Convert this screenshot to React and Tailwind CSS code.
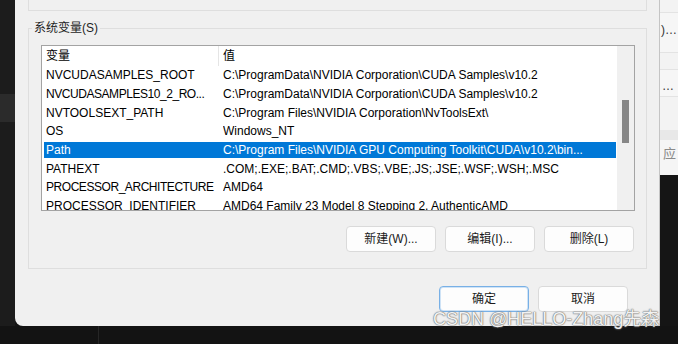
import React from 'react';

const rows = [
  ['NVCUDASAMPLES_ROOT', 'C:\\ProgramData\\NVIDIA Corporation\\CUDA Samples\\v10.2'],
  ['NVCUDASAMPLES10_2_RO...', 'C:\\ProgramData\\NVIDIA Corporation\\CUDA Samples\\v10.2'],
  ['NVTOOLSEXT_PATH', 'C:\\Program Files\\NVIDIA Corporation\\NvToolsExt\\'],
  ['OS', 'Windows_NT'],
  ['Path', 'C:\\Program Files\\NVIDIA GPU Computing Toolkit\\CUDA\\v10.2\\bin...', true],
  ['PATHEXT', '.COM;.EXE;.BAT;.CMD;.VBS;.VBE;.JS;.JSE;.WSF;.WSH;.MSC'],
  ['PROCESSOR_ARCHITECTURE', 'AMD64'],
  ['PROCESSOR_IDENTIFIER', 'AMD64 Family 23 Model 8 Stepping 2, AuthenticAMD'],
];

const WinButton = ({ children, primary }) => (
  <button
    className={`w-[90px] h-[26px] rounded-[4px] bg-[#fdfdfd] text-[12px] text-[#1b1b1b] ${
      primary ? 'border border-[#78b0e6] shadow-[inset_0_0_0_1px_#cfe3f6]' : 'border border-[#dadada]'
    }`}
  >
    {children}
  </button>
);

const VarRow = ({ name, value, selected }) => (
  <div className="h-[18.7px] shrink-0 flex pl-[2px] pr-[1px] py-[1px]">
    <div className={`flex-1 flex items-center whitespace-nowrap ${selected ? 'bg-[#0078d7] text-white' : 'text-black'}`}>
      <div className={`w-[179px] pl-[2px] overflow-hidden ${name.length > 20 ? 'tracking-[-0.45px]' : ''}`}>{name}</div>
      <div className="flex-1 overflow-hidden">{value}</div>
    </div>
  </div>
);

export default function App() {
  return (
    <div
      className="relative w-[678px] h-[344px] bg-[#151515] overflow-hidden flex flex-col"
      style={{ fontFamily: '"Liberation Sans", "Noto Sans CJK SC", sans-serif' }}
    >
      <div className="flex h-[326px]">
        {/* left background strip */}
        <div className="w-[15px] flex flex-col bg-[#1c1c1c]">
          <div className="h-[94px]" />
          <div className="h-[28px] bg-[#2b2b2b]" />
        </div>

        {/* dialog */}
        <div className="w-[645px] bg-[#f0f0f0] rounded-bl-[8px] border-r border-[#c4c4c4] pl-[13px] pr-[12px] flex flex-col">
          <div className="h-[11px] border-x border-b border-[#dedede]" />

          <div className="relative mt-[17px] h-[241px] border border-[#dedede] pl-[12px] pr-[11px] pt-[16px]">
            <span className="absolute left-[3px] top-[-9px] px-[2px] bg-[#f0f0f0] text-[12px] leading-[16px] text-[#1e1e1e]">
              系统变量(S)
            </span>

            <div className="h-[166px] border border-[#a3a3a3] bg-white flex text-[12px]">
              <div className="flex-1 flex flex-col overflow-hidden">
                <div className="h-[20px] shrink-0 flex items-center text-black">
                  <div className="w-[177px] h-full flex items-center pl-[4px] border-r border-[#e5e5e5]">变量</div>
                  <div className="pl-[4px]">值</div>
                </div>
                {rows.map(([n, v, s]) => (
                  <VarRow key={n} name={n} value={v} selected={s} />
                ))}
              </div>
              <div className="w-[17px] bg-[#f0f0f0] flex flex-col items-center">
                <div className="mt-[54px] w-[7px] h-[43px] bg-[#878787]" />
              </div>
            </div>

            <div className="mt-[15px] flex justify-end gap-[9px] pr-[1px]">
              <WinButton>新建(W)...</WinButton>
              <WinButton>编辑(I)...</WinButton>
              <WinButton>删除(L)</WinButton>
            </div>
          </div>

          <div className="mt-[17px] flex justify-end gap-[9px] mr-[19px]">
            <WinButton primary>确定</WinButton>
            <WinButton>取消</WinButton>
          </div>
        </div>

        {/* window behind, on the right */}
        <div className="w-[18px] flex flex-col bg-[#151515] text-[12px] text-[#333]">
          <div className="h-[13px] bg-[#f3f3f3] border-b border-[#e3e3e3]" />
          <div className="h-[40px] bg-[#f6f6f6] border-b border-[#e3e3e3] flex items-center pl-[1px] pb-[6px]">)…</div>
          <div className="h-[17px] bg-[#f3f3f3] border-b border-[#e3e3e3]" />
          <div className="h-[27px] bg-[#f6f6f6] border-b border-[#e3e3e3] flex items-center pl-[2px] pt-[6px]">…</div>
          <div className="h-[33px] bg-[#f3f3f3]" />
          <div className="h-[10px] bg-[#e8e8e8]" />
          <div className="h-[35px] bg-[#f5f5f5] flex items-center pl-[3px] pb-[8px] text-[13px] text-[#8a8a8a]">应</div>
        </div>
      </div>

      <div className="h-[18px] bg-[#131313] flex">
        <div className="w-[98px]" />
        <div className="w-px bg-[#262626]" />
      </div>

      <div className="absolute left-[433px] top-[308px] text-[18px] leading-[22px] text-[#f2f2f2] whitespace-nowrap [text-shadow:0_0_1px_#6e6e6e,0_0_1px_#6e6e6e,0_0_2px_#9a9a9a]">
        CSDN @HELLO-Zhang先森
      </div>
    </div>
  );
}
